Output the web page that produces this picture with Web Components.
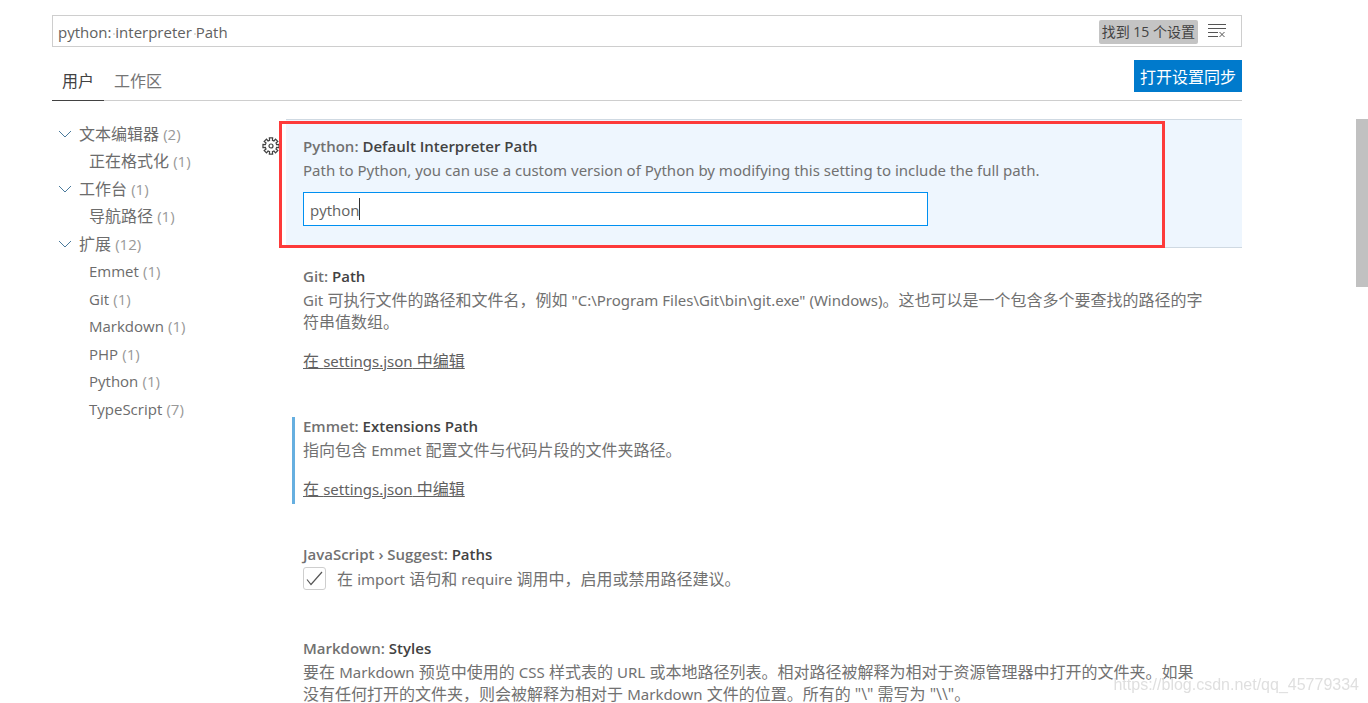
<!DOCTYPE html>
<html lang="zh-CN">
<head>
<meta charset="utf-8">
<title>设置</title>
<style>
    html, body {
        margin: 0;
        height: 100%;
    }
    body {
        font: 16px/22px "Open Sans", "Noto Sans CJK SC", sans-serif;
        color: #717171;
        background: #fff;
        overflow: hidden;
    }
    [lang=en] {
        font-family: "Noto Sans", sans-serif;
        font-size: 15px;
    }
</style>
</head>
<body>
<settings-editor>
    <settings-search slot="header" value="python: interpreter Path"><span>找到 15 个设置</span></settings-search>
    <settings-tabs slot="header"></settings-tabs>

    <settings-toc slot="toc"></settings-toc>

    <setting-item kind="text" category="Python:" label="Default Interpreter Path" value="python" focused>
        <span lang="en">Path to Python, you can use a custom version of Python by modifying this setting to include the full path.</span>
    </setting-item>
    <setting-item kind="json" category="Git:" label="Path">
        <span lang="en">Git</span> 可执行文件的路径和文件名，例如 <span lang="en">"C:\Program Files\Git\bin\git.exe" (Windows)</span>。这也可以是一个包含多个要查找的路径的字<br>符串值数组。
    </setting-item>
    <setting-item kind="json" category="Emmet:" label="Extensions Path" modified>
        指向包含 <span lang="en">Emmet</span> 配置文件与代码片段的文件夹路径。
    </setting-item>
    <setting-item kind="bool" category="JavaScript › Suggest:" label="Paths">
        在 <span lang="en">import</span> 语句和 <span lang="en">require</span> 调用中，启用或禁用路径建议。
    </setting-item>
    <setting-item kind="json" category="Markdown:" label="Styles">
        要在 <span lang="en">Markdown</span> 预览中使用的 <span lang="en">CSS</span> 样式表的 <span lang="en">URL</span> 或本地路径列表。相对路径被解释为相对于资源管理器中打开的文件夹。如果<br>没有任何打开的文件夹，则会被解释为相对于 <span lang="en">Markdown</span> 文件的位置。所有的 "\" 需写为 "\\"。
    </setting-item>
</settings-editor>
<page-watermark>https://blog.csdn.net/qq_45779334</page-watermark>

<script>
(function () {
    function shadow(host, html) {
        const tmpl = document.createElement('template');
        tmpl.innerHTML = html;
        const root = host.attachShadow({mode: 'open'});
        root.appendChild(tmpl.content.cloneNode(true));
        return root;
    }

    class SettingsEditor extends HTMLElement {
        constructor() {
            super();
            shadow(this, `
                <style>
                    :host {
                        display: flex;
                        flex-direction: column;
                        height: 100vh;
                        box-sizing: border-box;
                        padding-top: 15px;
                    }
                    header {
                        margin: 0 126px 18px 52px;
                    }
                    .body {
                        position: relative;
                        display: flex;
                        flex: 1;
                        min-height: 0;
                        padding: 0 126px 0 52px;
                        overflow: hidden;
                    }
                    nav {
                        flex: 0 0 234px;
                    }
                    main {
                        flex: 1;
                        min-width: 0;
                    }
                    .thumb {
                        position: absolute;
                        top: 0;
                        right: 0;
                        width: 12px;
                        height: 168px;
                        background: #c1c1c1;
                    }
                </style>
                <header><slot name="header"></slot></header>
                <div class="body">
                    <nav><slot name="toc"></slot></nav>
                    <main><slot></slot></main>
                    <div class="thumb"></div>
                </div>
            `);
        }
    }

    class SettingsSearch extends HTMLElement {
        constructor() {
            super();
            this._root = shadow(this, `
                <style>
                    :host {
                        display: flex;
                        align-items: center;
                        height: 30px;
                        border: 1px solid #cecece;
                    }
                    /* the two small squares mark the spaces */
                    input {
                        flex: 1;
                        min-width: 0;
                        height: 30px;
                        box-sizing: border-box;
                        padding: 2px 5px 0;
                        border: 0;
                        outline: 0;
                        background:
                            linear-gradient(#ddd, #ddd) 60px 17px / 2px 2px no-repeat,
                            linear-gradient(#ddd, #ddd) 141px 17px / 2px 2px no-repeat;
                        font: inherit;
                        font-size: 15px;
                        color: #616161;
                    }
                    .count {
                        padding: 0 3px;
                        margin-top: 2px;
                        border-radius: 2px;
                        background: #c4c4c4;
                        color: #424242;
                        font-size: 14px;
                        line-height: 24px;
                    }
                    button {
                        display: flex;
                        margin: 0 14px 0 9px;
                        padding: 0;
                        border: 0;
                        background: none;
                        color: #555;
                    }
                </style>
                <input type="text" aria-label="搜索设置">
                <div class="count"><slot></slot></div>
                <button type="button" aria-label="清除设置搜索输入">
                    <svg width="20" height="16" viewBox="0 0 20 16" fill="none" stroke="currentColor">
                        <path d="M1 1.500h18M1 5.500h18M1 9.500h10M1 13.500h10M12.500 9l5 5M17.500 9l-5 5"/>
                    </svg>
                </button>
            `);
        }

        connectedCallback() {
            this._root.querySelector('input').value = this.getAttribute('value');
        }
    }

    class SettingsTabs extends HTMLElement {
        constructor() {
            super();
            shadow(this, `
                <style>
                    :host {
                        display: flex;
                        align-items: flex-end;
                        height: 53px;
                        border-bottom: 1px solid #cecece;
                    }
                    button {
                        font: inherit;
                        border: 0;
                        background: none;
                        color: #757575;
                    }
                    .tab {
                        height: 38px;
                        margin-bottom: -1px;
                        padding: 0 10px 2px;
                        border-bottom: 1px solid transparent;
                    }
                    .active {
                        color: #424242;
                        border-bottom-color: #424242;
                    }
                    .sync {
                        height: 32px;
                        margin: 0 0 8px auto;
                        padding: 2px 6px 0;
                        background: #007acc;
                        color: #fff;
                    }
                </style>
                <button type="button" class="tab active">用户</button>
                <button type="button" class="tab">工作区</button>
                <button type="button" class="sync">打开设置同步</button>
            `);
        }
    }

    const TOC = [
        ['文本编辑器', 2, true],
        ['正在格式化', 1],
        ['工作台', 1, true],
        ['导航路径', 1],
        ['扩展', 12, true],
        ['Emmet', 1],
        ['Git', 1],
        ['Markdown', 1],
        ['PHP', 1],
        ['Python', 1],
        ['TypeScript', 7]
    ];

    class SettingsToc extends HTMLElement {
        constructor() {
            super();
            const rows = TOC.map(([name, count, group]) => `
                <li class="${group ? 'group' : 'leaf'}">
                    ${group ? '<svg width="14" height="14" viewBox="0 0 14 14" fill="none" stroke="#4a7a9c"><path d="M1 4l6 6 6-6"/></svg>' : ''}
                    <a href="#"><span class="${/^[A-Z]/.test(name) ? 'en' : ''}">${name}</span> <span class="count">(${count})</span></a>
                </li>`).join('');
            shadow(this, `
                <style>
                    :host {
                        display: block;
                    }
                    ul {
                        display: grid;
                        grid-auto-rows: 27px 28px;
                        margin: 1px 0 0;
                        padding: 0;
                        list-style: none;
                    }
                    li {
                        display: flex;
                        align-items: center;
                        gap: 7px;
                        padding-left: 6px;
                    }
                    .leaf {
                        padding-left: 37px;
                    }
                    a {
                        color: #6c6c6c;
                        text-decoration: none;
                    }
                    .en, .count {
                        font-size: 15px;
                    }
                    .count {
                        color: #999;
                    }
                </style>
                <ul>${rows}</ul>
            `);
        }
    }

    class SettingItem extends HTMLElement {
        constructor() {
            super();
            this._root = this.attachShadow({mode: 'open'});
        }

        connectedCallback() {
            const focused = this.hasAttribute('focused');
            this._root.innerHTML = `
                <style>
                    :host {
                        display: block;
                        position: relative;
                        padding: 18px 18px 27px 17px;
                    }
                    :host([focused]) {
                        margin-bottom: 1px;
                        padding: 17px 18px 21px 17px;
                        border: solid #cfd9e2;
                        border-width: 1px 0;
                        background: #eef6fe;
                    }
                    :host([kind=bool]) {
                        padding-bottom: 31px;
                    }
                    /* bar beside a setting that differs from its default */
                    :host([modified])::before {
                        content: "";
                        position: absolute;
                        left: 6px;
                        top: 18px;
                        bottom: 23px;
                        width: 3px;
                        background: #66afe0;
                    }
                    h3 {
                        margin: 0 0 4px;
                        font-size: 15px;
                        line-height: 18px;
                        font-weight: 600;
                    }
                    h3 label, h3 b {
                        font-weight: 600;
                        color: #424242;
                    }
                    .text {
                        display: block;
                        width: 625px;
                        max-width: 100%;
                        height: 34px;
                        box-sizing: border-box;
                        margin-top: 11px;
                        padding: 2px 6px 0;
                        border: 1px solid #0090f1;
                        outline: 0;
                        font: inherit;
                        font-size: 15px;
                        color: #616161;
                        background: linear-gradient(#333, #333) 55px 5px / 1px 22px no-repeat #fff;
                    }
                    .json {
                        display: table;
                        margin-top: 17px;
                        color: #616161;
                    }
                    .json span {
                        font-family: "Noto Sans", sans-serif;
                        font-size: 15px;
                    }
                    .check {
                        display: flex;
                        align-items: center;
                        gap: 11px;
                    }
                    .check input {
                        appearance: none;
                        flex: none;
                        width: 23px;
                        height: 23px;
                        margin: 0;
                        border: 1px solid #cecece;
                        border-radius: 3px;
                    }
                    .box {
                        display: grid;
                    }
                    .box > * {
                        grid-area: 1 / 1;
                    }
                    .box svg {
                        place-self: center;
                        pointer-events: none;
                    }
                    .gear {
                        position: absolute;
                        left: -24px;
                        top: 17px;
                        display: flex;
                        padding: 0;
                        border: 0;
                        background: none;
                        color: #424242;
                    }
                    .mark {
                        position: absolute;
                        inset: 1px 77px -1px -7px;
                        border: 3px solid #fd3a3a;
                        pointer-events: none;
                    }
                </style>
                ${focused ? this._gear() : ''}
                <h3>${this.getAttribute('category')} ${this._title()}</h3>
                ${this._body()}
                ${focused ? '<div class="mark"></div>' : ''}
            `;
            const text = this._root.querySelector('.text');
            if (text) {
                text.value = this.getAttribute('value');
            }
        }

        _title() {
            const label = this.getAttribute('label');
            return this.getAttribute('kind') === 'text' ? `<label for="value">${label}</label>` : `<b>${label}</b>`;
        }

        _body() {
            switch (this.getAttribute('kind')) {
                case 'text':
                    return '<div><slot></slot></div><input id="value" class="text" type="text">';
                case 'bool':
                    return `
                        <div class="check">
                            <span class="box">
                                <input id="value" type="checkbox" checked>
                                <svg width="19" height="19" viewBox="0 0 19 19" fill="none" stroke="#555" stroke-width="1.200"><path d="M2 10.500l4 5L17 3"/></svg>
                            </span>
                            <label for="value"><slot></slot></label>
                        </div>`;
                default:
                    return '<div><slot></slot></div><a class="json" href="#">在 <span>settings.json</span> 中编辑</a>';
            }
        }

        _gear() {
            let teeth = '';
            for (let i = 0; i < 8; i++) {
                const a = i * Math.PI / 4;
                // corners of one tooth: root, tip, tip, root
                [[-0.25, 5.8], [-0.2, 8.2], [0.2, 8.2], [0.25, 5.8]].forEach(([d, r]) => {
                    teeth += `${(9 + r * Math.sin(a + d)).toFixed(2)},${(9 - r * Math.cos(a + d)).toFixed(2)} `;
                });
            }
            return `
                <button type="button" class="gear" aria-label="更多操作">
                    <svg width="18" height="18" viewBox="0 0 18 18" fill="none" stroke="currentColor" stroke-width="1.200">
                        <polygon points="${teeth}"/>
                        <circle cx="9" cy="9" r="2"/>
                    </svg>
                </button>`;
        }
    }

    class PageWatermark extends HTMLElement {
        constructor() {
            super();
            shadow(this, `
                <style>
                    :host {
                        position: fixed;
                        right: 9px;
                        bottom: 8px;
                        font: 16px/20px "Liberation Sans", sans-serif;
                        color: rgba(215, 215, 215, .8);
                        pointer-events: none;
                    }
                </style>
                <slot></slot>
            `);
        }
    }

    customElements.define('settings-editor', SettingsEditor);
    customElements.define('settings-search', SettingsSearch);
    customElements.define('settings-tabs', SettingsTabs);
    customElements.define('settings-toc', SettingsToc);
    customElements.define('setting-item', SettingItem);
    customElements.define('page-watermark', PageWatermark);
})();
</script>
</body>
</html>
